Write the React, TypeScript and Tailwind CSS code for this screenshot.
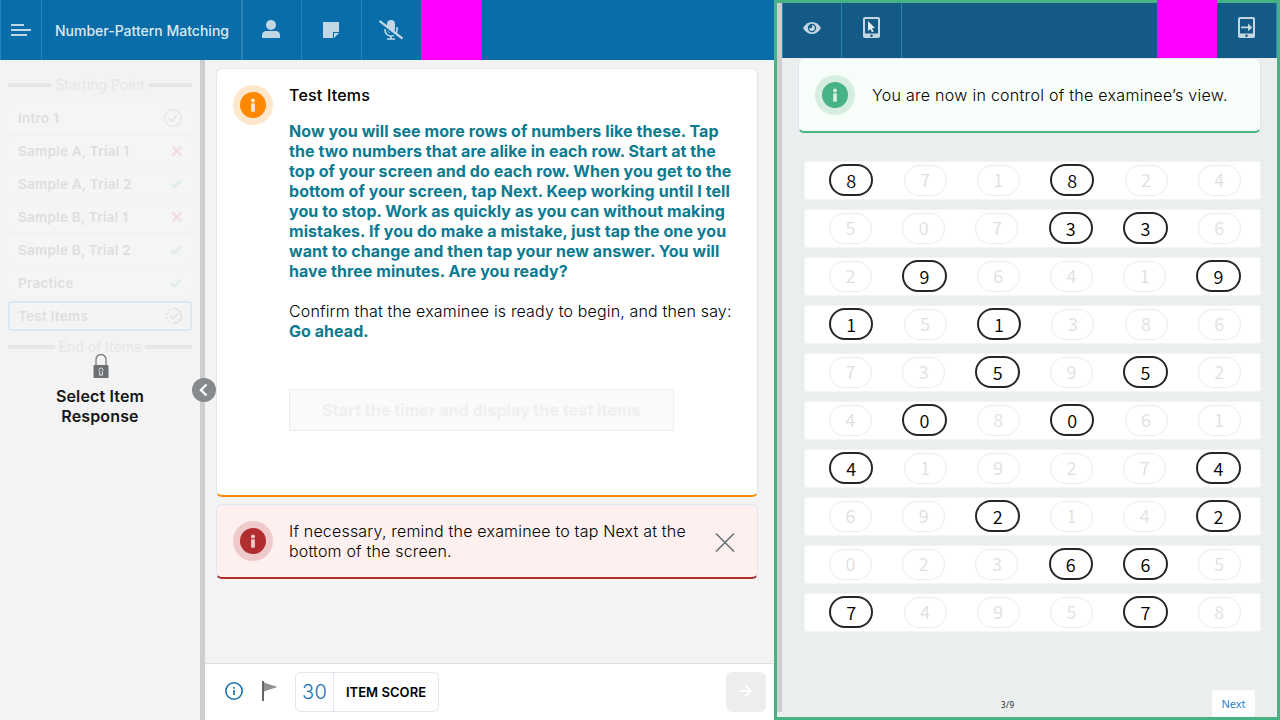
import type { ReactNode } from 'react';

type Status = 'done' | 'wrong' | 'right' | 'active';

const ITEMS: { name: string; status: Status }[] = [
  { name: 'Intro 1', status: 'done' },
  { name: 'Sample A, Trial 1', status: 'wrong' },
  { name: 'Sample A, Trial 2', status: 'right' },
  { name: 'Sample B, Trial 1', status: 'wrong' },
  { name: 'Sample B, Trial 2', status: 'right' },
  { name: 'Practice', status: 'right' },
  { name: 'Test Items', status: 'active' },
];

const ROWS: { digits: string; picked: number[] }[] = [
  { digits: '871824', picked: [0, 3] },
  { digits: '507336', picked: [3, 4] },
  { digits: '296419', picked: [1, 5] },
  { digits: '151386', picked: [0, 2] },
  { digits: '735952', picked: [2, 4] },
  { digits: '408061', picked: [1, 3] },
  { digits: '419274', picked: [0, 5] },
  { digits: '692142', picked: [2, 5] },
  { digits: '023665', picked: [3, 4] },
  { digits: '749578', picked: [0, 4] },
];

function StatusIcon({ status }: { status: Status }) {
  if (status === 'wrong')
    return (
      <svg width="12" height="12" viewBox="0 0 12 12" className="-mr-[1px]">
        <path d="M1.500 1.500l9 9M10.500 1.500l-9 9" stroke="#f0e0e0" strokeWidth="2.600" />
      </svg>
    );
  if (status === 'right')
    return (
      <svg width="12" height="10" viewBox="0 0 12 10">
        <path d="M1 5l3.400 3.200L11 1.500" fill="none" stroke="#e2eee8" strokeWidth="2.600" />
      </svg>
    );
  if (status === 'active')
    return (
      <svg width="18" height="18" viewBox="0 0 18 18" className="-mr-[1px]" fill="none" stroke="#e2e2e2">
        <path d="M9 1.600a7.400 7.400 0 0 1 0 14.800" strokeWidth="1.800" />
        <path d="M9 16.400A7.400 7.400 0 0 1 9 1.600" strokeWidth="1.800" strokeDasharray="2 2.400" />
        <path d="M5.300 9l2.700 2.700 4.600-4.800" strokeWidth="1.600" />
      </svg>
    );
  return (
    <svg width="18" height="18" viewBox="0 0 18 18" fill="none" stroke="#e4e4e4">
      <circle cx="9" cy="9" r="8.300" strokeWidth="1.200" />
      <path d="M4.800 9.300l2.800 2.800 5.600-5.800" strokeWidth="1.600" />
    </svg>
  );
}

function InfoBadge({ ring, fill, mark }: { ring: string; fill: string; mark: string }) {
  return (
    <svg width="40" height="40" viewBox="0 0 40 40" className="shrink-0">
      <circle cx="20" cy="20" r="20" fill={ring} />
      <circle cx="20" cy="20" r="13" fill={fill} />
      <path d="M18.100 18.400h3.800v8.300h-3.800z" fill={mark} />
      <circle cx="20" cy="15.400" r="2" fill={mark} />
    </svg>
  );
}

function Divider({ children }: { children: ReactNode }) {
  return (
    <div className="flex h-5 items-center gap-[4px] text-[14px] leading-5 text-[#e6e6e6]">
      <span className="h-1 flex-1 bg-[#e6e6e6]" />
      <span>{children}</span>
      <span className="h-1 flex-1 bg-[#e6e6e6]" />
    </div>
  );
}

function Tablet({ children }: { children: ReactNode }) {
  return (
    <svg width="17" height="21" viewBox="0 0 17 21">
      <rect width="17" height="21" rx="2" fill="#c5d6e3" />
      <rect x="2" y="2" width="13" height="14.500" fill="#135b86" />
      <circle cx="8.500" cy="18.700" r="1.300" fill="#135b86" />
      {children}
    </svg>
  );
}

function TopBar() {
  return (
    <header className="flex h-[60px] shrink-0 border-l border-[#2a83b7] bg-[#086da9]">
      <div className="flex w-[41px] items-center justify-center border-r border-[#2a83b7]">
        <svg width="20" height="12" viewBox="0 0 20 12" fill="#c2d7e6">
          <path d="M0 0h13v2H0zM0 5h20v2H0zM0 10h16v2H0z" />
        </svg>
      </div>
      <div className="flex w-[201px] items-center border-r-2 border-[#2a83b7] pt-[1px] pl-[13px] text-[14px] font-medium whitespace-nowrap text-[#dce9f2]">
        Number-Pattern Matching
      </div>
      <div className="flex w-[59px] items-center justify-center border-r border-[#2a83b7] pr-[2px] pb-[2px]">
        <svg width="18" height="18" viewBox="0 0 18 18" fill="#c2d7e6">
          <circle cx="9" cy="5" r="5" />
          <path d="M0 18v-2.500q0-4.500 4.500-4.500h9q4.500 0 4.500 4.500V18z" />
        </svg>
      </div>
      <div className="flex w-[60px] items-center justify-center border-r border-[#2a83b7] pr-[2px]">
        <svg width="16" height="16" viewBox="0 0 16 16" fill="#c2d7e6">
          <path d="M0 0h16v10h-6v6H0z" />
          <path d="M11 11h5l-5 5z" />
        </svg>
      </div>
      <div className="flex w-[60px] items-center justify-center border-r border-[#2a83b7] pr-[2px]">
        <svg width="24" height="20" viewBox="0 0 24 20" fill="none" stroke="#c2d7e6">
          <rect x="8" y="0" width="8" height="13" rx="4" fill="#c2d7e6" stroke="none" />
          <path d="M6 9v1a6 6 0 0 0 12 0V7M12 16v3M8 19h8" strokeWidth="1.600" />
          <path d="M-.5 2.800L23 20.300" stroke="#086da9" strokeWidth="2" />
          <path d="M.5 1L23.500 18.500" strokeWidth="2.200" />
        </svg>
      </div>
      <div className="w-[60px] bg-[#ff00ff]" />
    </header>
  );
}

function Sidebar() {
  return (
    <aside className="relative w-[205px] shrink-0 border-r-[5px] border-[#cecece] px-2 pt-[15px]">
      <Divider>Starting Point</Divider>
      <div className="mt-2 mb-[6px] flex flex-col gap-[3px]">
        {ITEMS.map((item) => (
          <div
            key={item.name}
            className={
              'flex h-[30px] items-center justify-between rounded-[3px] text-[13.500px] font-semibold tracking-[0.25px] text-[#dedede] ' +
              (item.status === 'active' ? 'border-2 border-[#dce9f4] bg-[#f4f4f4] px-[8px]' : 'border border-[#f5f5f5] bg-[#f5f5f5] px-[9px]')
            }
          >
            <span className="pt-px">{item.name}</span>
            <StatusIcon status={item.status} />
          </div>
        ))}
      </div>
      <Divider>End of Items</Divider>
      <div className="-mt-[3px] flex flex-col items-center text-center text-base leading-5 font-semibold tracking-[0.15px] text-[#161616]">
        <svg width="16" height="24" viewBox="0 0 16 24" className="ml-[1px]">
          <path d="M3 11V5.500a5 5 0 0 1 10 0V11" fill="none" stroke="#777b7d" strokeWidth="1.300" />
          <rect x=".5" y="11" width="15" height="13" rx="1" fill="#6c7072" />
          <path d="M8 14a2 2 0 0 1 1.200 3.600l.5 3.400H6.300l.5-3.400A2 2 0 0 1 8 14z" fill="none" stroke="#e3e3e3" />
        </svg>
        <p className="mt-2">
          Select Item
          <br />
          Response
        </p>
      </div>
      <button className="absolute top-[318px] left-[192px] flex h-6 w-6 items-center justify-center rounded-full bg-[#858a8c]">
        <svg width="24" height="24" viewBox="0 0 24 24" fill="none" stroke="#fff" strokeWidth="2.400">
          <path d="M14.500 6.500L9 12l5.500 5.500" />
        </svg>
      </button>
    </aside>
  );
}

function Main() {
  return (
    <main className="flex w-[569px] shrink-0 flex-col">
      <div className="flex flex-1 flex-col gap-[7px] px-[11px] pt-2 pr-4">
        <section className="flex h-[429px] rounded-md border border-b-2 border-[#e1e5f0] border-b-[#fb8b0a] bg-white pt-4 pl-4">
          <InfoBadge ring="#ffe7cc" fill="#ff8800" mark="#ffe7cc" />
          <div className="ml-4 w-[450px] text-base leading-5 text-black">
            <h1 className="font-medium tracking-[0.2px]">Test Items</h1>
            <p className="mt-4 font-bold tracking-[0.07px] whitespace-nowrap text-[#0b7b91]">
              Now you will see more rows of numbers like these. Tap<br />
              the two numbers that are alike in each row. Start at the<br />
              top of your screen and do each row. When you get to the<br />
              bottom of your screen, tap Next. Keep working until I tell<br />
              you to stop. Work as quickly as you can without making<br />
              mistakes. If you do make a mistake, just tap the one you<br />
              want to change and then tap your new answer. You will<br />
              have three minutes. Are you ready?
            </p>
            <p className="mt-5 font-[350] tracking-[0.16px] whitespace-nowrap">
              Confirm that the examinee is ready to begin, and then say:<br />
              <b className="font-bold tracking-[0.05px] text-[#0b7b91]">Go ahead.</b>
            </p>
            <button className="mt-12 h-[42px] w-[385px] rounded-xs border border-[#eeeeee] bg-[#fafafa] font-bold tracking-[0.07px] text-[#efefef]">
              Start the timer and display the test items
            </button>
          </div>
        </section>
        <section className="flex h-[75px] rounded-md border border-b-2 border-[#e1e5f0] border-b-[#b12d2f] bg-[#fff0f0] pt-4 pl-4">
          <InfoBadge ring="#efcaca" fill="#b12d2f" mark="#efcaca" />
          <p className="ml-4 text-base leading-5 font-[350] tracking-[0.19px] whitespace-nowrap">
            If necessary, remind the examinee to tap Next at the<br />
            bottom of the screen.
          </p>
          <svg width="20" height="20" viewBox="0 0 20 20" className="mt-[11px] mr-[22px] ml-auto">
            <path d="M1 1.500l18 18M19 1.500l-18 18" stroke="#697276" strokeWidth="1.600" />
          </svg>
        </section>
      </div>
      <footer className="flex h-[57px] items-center border-t border-[#dedede] bg-white pr-2 pl-5">
        <svg width="18" height="18" viewBox="0 0 18 18" fill="none" stroke="#1273ad" className="relative -top-px">
          <circle cx="9" cy="9" r="8.200" strokeWidth="1.600" />
          <path d="M9 8v5M9 5v1.700" strokeWidth="1.600" />
        </svg>
        <svg width="16" height="20" viewBox="0 0 16 20" className="relative -top-px ml-[19px]">
          <path d="M0 0h2v20H0z" fill="#666" />
          <path d="M2 1.500L15.500 6 2 10.500z" fill="#929292" />
        </svg>
        <div className="ml-[17px] flex h-10 w-[144px] rounded-md border border-[#e1e5f0]">
          <span className="flex w-[38px] items-center justify-center border-r border-[#e1e5f0] text-[20px] font-light tracking-[0.2px] text-[#1a70b8]">30</span>
          <span className="flex flex-1 items-center justify-center pt-px text-[13px] font-semibold tracking-[0.05px] text-black">ITEM SCORE</span>
        </div>
        <button className="ml-auto flex h-10 w-10 items-center justify-center rounded-md bg-[#eeeeee]">
          <svg width="14" height="14" viewBox="0 0 14 14" fill="none" stroke="#fff" strokeWidth="1.800">
            <path d="M1 6h11M6.500 .5L12 6 6.500 11.500" />
          </svg>
        </button>
      </footer>
    </main>
  );
}

function Examinee() {
  return (
    <div className="relative flex w-[506px] shrink-0 border-[3px] border-[#47b283] bg-[#eaeeef]">
      <div className="h-[709px] w-[5px] shrink-0 bg-[#cecece]" />
      <div className="flex flex-1 flex-col">
        <header className="flex h-[55px] shrink-0 border-x border-[#2a83b7] bg-[#135b86]">
          <div className="flex w-[59px] items-center justify-center border-r border-[#2a83b7] pb-[6px]">
            <svg width="18" height="12" viewBox="0 0 18 12">
              <path d="M0 6Q3.500 0 9 0t9 6q-3.500 6-9 6T0 6z" fill="#c5d6e3" />
              <circle cx="9" cy="6" r="4.200" fill="#135b86" />
              <circle cx="9" cy="6" r="2.900" fill="#c5d6e3" />
              <path d="M9 6V2.800A3.200 3.200 0 0 0 5.800 6z" fill="#135b86" />
            </svg>
          </div>
          <div className="flex w-[60px] items-center justify-center border-r border-[#2a83b7] pb-[6px]">
            <Tablet>
              <path d="M5 4l7 7-3 .2 1.600 3.300-1.600.8-1.700-3.400L5 14z" fill="#e6eef4" />
            </Tablet>
          </div>
          <div className="ml-auto flex w-[59px] items-center justify-center pb-[6px]">
            <Tablet>
              <path d="M3 9.600h7V6.600l4.300 3.800-4.300 3.800v-3H3z" fill="#c5d6e3" />
            </Tablet>
          </div>
        </header>
        <section className="mx-4 flex h-[75px] shrink-0 items-center rounded-md border border-b-2 border-[#e1e5f0] border-b-[#47b283] bg-[#f7fdf9] pl-4">
          <InfoBadge ring="#d5eee1" fill="#47b283" mark="#d5eee1" />
          <p className="ml-[17px] text-base leading-5 font-[350] tracking-[0.28px] whitespace-nowrap text-black">
            You are now in control of the examinee’s view.
          </p>
        </section>
        <div className="mt-[28px] ml-[22px] flex w-[457px] flex-col gap-[9px] font-['Noto_Sans_CJK_SC',sans-serif] text-[18px] leading-[30px] font-[350]">
          {ROWS.map(({ digits, picked }) => (
            <div key={digits} className="flex h-[39px] items-center gap-[30.200px] rounded-xs border border-[#f3f5f5] bg-white pb-px pl-6">
              {digits.split('').map((digit, c) => (
                <span
                  key={c}
                  className={
                    'flex shrink-0 items-center justify-center ' +
                    (picked.includes(c)
                      ? 'h-[32px] w-[44.400px] rounded-[16px] border-2 border-[#262626] pb-px text-black'
                      : 'h-[31px] w-[43px] rounded-[15px] border border-[#ebebeb] pb-[2px] text-[#dfdfdf]')
                  }
                >
                  {digit}
                </span>
              ))}
            </div>
          ))}
        </div>
        <div className="mt-auto flex items-end">
          <span className="ml-[219px] pb-[6px] font-['Noto_Sans',sans-serif] text-[8px] tracking-[0.500px] text-[#222]">3/9</span>
          <button className="mr-[22px] ml-auto h-[27px] w-[43px] rounded-xs bg-white pt-px font-['Noto_Sans',sans-serif] text-[11px] text-[#2c80cf]">
            Next
          </button>
        </div>
      </div>
      <div className="absolute top-[-3px] left-[380px] h-[58px] w-[60px] bg-[#ff00ff]" />
    </div>
  );
}

export default function App() {
  return (
    <div className="flex h-[720px] w-[1280px] overflow-hidden bg-[#f3f3f3] font-['Inter',sans-serif]">
      <div className="flex w-[774px] shrink-0 flex-col">
        <TopBar />
        <div className="flex min-h-0 flex-1">
          <Sidebar />
          <Main />
        </div>
      </div>
      <Examinee />
    </div>
  );
}
